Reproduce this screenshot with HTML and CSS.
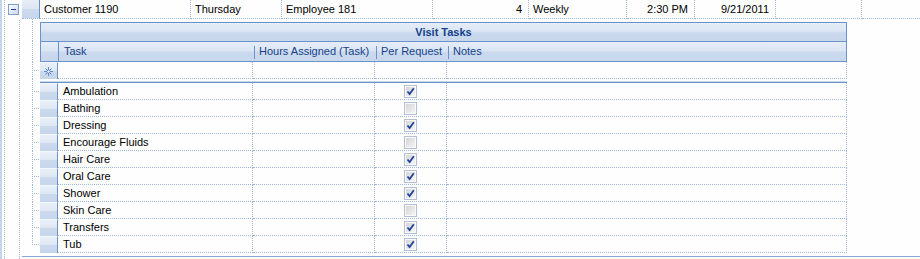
FILE: index.html
```html
<!DOCTYPE html>
<html lang="en">
<head>
    <meta charset="UTF-8">
    <title>Visit Tasks</title>
    <link rel="stylesheet" href="styles.css">
</head>
<body>
<div class="page">
    <div class="master-row">
        <div class="gutter"><span class="expander"><i></i></span></div>
        <div class="row-head"></div>
        <div class="cell">Customer 1190</div>
        <div class="cell">Thursday</div>
        <div class="cell">Employee 181</div>
        <div class="cell num">4</div>
        <div class="cell">Weekly</div>
        <div class="cell num">2:30 PM</div>
        <div class="cell num">9/21/2011</div>
        <div class="cell"></div>
        <div class="cell last"></div>
    </div>

    <div class="detail">
        <div class="d-row gap"><div class="tree"></div></div>
        <div class="d-row">
            <div class="tree"></div>
            <div class="caption">Visit Tasks</div>
        </div>
        <div class="d-row">
            <div class="tree"></div>
            <div class="col-heads">
                <div class="rh"></div>
                <div class="ch">Task</div>
                <div class="ch sep">Hours Assigned (Task)</div>
                <div class="ch sep">Per Request</div>
                <div class="ch sep">Notes</div>
            </div>
        </div>
        <div class="d-row">
            <div class="tree stub"></div>
            <div class="cells">
                <div class="rh">
                    <svg width="9" height="9" viewBox="0 0 9 9"><g stroke="#5f8bcb" stroke-width="1"><line x1="4.5" y1="0" x2="4.5" y2="9"/><line x1="0" y1="4.5" x2="9" y2="4.5"/><line x1="1.5" y1="1.5" x2="7.5" y2="7.5"/><line x1="7.5" y1="1.5" x2="1.5" y2="7.5"/></g><circle cx="4.5" cy="4.5" r="1.6" fill="#fff" stroke="#5f8bcb"/></svg>
                </div>
                <div class="c"></div>
                <div class="c"></div>
                <div class="c"></div>
                <div class="c"></div>
            </div>
        </div>
        <div class="d-row">
            <div class="tree"></div>
            <div class="divider"></div>
        </div>
        <div id="rows"></div>
    </div>

    <div class="next-row"></div>
</div>

<script>
    var tasks = [
        ["Ambulation", true], ["Bathing", false], ["Dressing", true],
        ["Encourage Fluids", false], ["Hair Care", true], ["Oral Care", true],
        ["Shower", true], ["Skin Care", false], ["Transfers", true], ["Tub", true]
    ];
    var tick = '<svg width="11" height="11" viewBox="0 0 11 11"><path d="M2.5 5.5 L4.6 8 L8.8 2.2" fill="none" stroke="#20439b" stroke-width="1.8"/></svg>';
    var html = "";
    tasks.forEach(function (t, i) {
        html += '<div class="d-row">' +
            '<div class="tree stub' + (i == tasks.length - 1 ? ' end' : '') + '"></div>' +
            '<div class="cells">' +
            '<div class="rh"></div>' +
            '<div class="c">' + t[0] + '</div>' +
            '<div class="c"></div>' +
            '<div class="c mid"><span class="chk">' + (t[1] ? tick : '') + '</span></div>' +
            '<div class="c"></div>' +
            '</div></div>';
    });
    document.getElementById("rows").innerHTML = html;
</script>
</body>
</html>
```

FILE: styles.css
```css
body {
    margin: 0;
    font-family: "Liberation Sans", Arial, sans-serif;
    font-size: 11px;
    color: #000;
    background: #fdfefd;
}
.page {
    min-height: 100vh;
    background:
        linear-gradient(#c3d5ef, #c3d5ef) 0 0 / 2px 100% no-repeat,
        repeating-linear-gradient(to bottom, #9fb7dc 0 1px, transparent 1px 2px) 4px 0 / 1px 100% no-repeat,
        repeating-linear-gradient(to bottom, #9fb7dc 0 1px, transparent 1px 2px) 19px 0 / 1px 100% no-repeat;
}

/* master row */
.master-row {
    display: grid;
    grid-template-columns: 22px 18px 151px 91px 151px 96px 98px 68px 81px 86px 1fr;
    height: 19px;
}
.gutter {
    background:
        linear-gradient(#c3d5ef, #c3d5ef) 0 0 / 2px 100% no-repeat,
        repeating-linear-gradient(to bottom, #9fb7dc 0 1px, transparent 1px 2px) 4px 0 / 1px 100% no-repeat,
        #fdfefd;
    padding: 4px 0 0 8px;
}
.expander {
    display: flex;
    align-items: center;
    justify-content: center;
    width: 9px;
    height: 9px;
    border: 1px solid #7e9fd0;
    background: linear-gradient(135deg, #ffffff, #c9d8ef);
}
.expander i {
    width: 5px;
    height: 1px;
    background: #1f3f86;
}
.row-head {
    background: linear-gradient(#e6edf8, #dce6f4 50%, #ccdaee 50%, #c6d6eb);
    border-right: 1px solid #6b93cb;
    border-bottom: 1px dotted #9fb7dc;
}
.cell {
    border-right: 1px dotted #9fb7dc;
    border-bottom: 1px dotted #9fb7dc;
    padding: 0 4px;
    line-height: 18px;
    white-space: nowrap;
}
.cell.num {
    text-align: right;
    padding-right: 6px;
}
.cell.last {
    border-right: none;
}

/* detail grid */
.d-row {
    display: flex;
}
.d-row.gap {
    height: 3px;
}
.tree {
    width: 40px;
    flex: none;
    background: repeating-linear-gradient(to bottom, #9fb7dc 0 1px, transparent 1px 2px) 32px 0 / 1px 100% no-repeat;
}
.tree.stub {
    background:
        repeating-linear-gradient(to right, #9fb7dc 0 1px, transparent 1px 2px) 32px 8px / 8px 1px no-repeat,
        repeating-linear-gradient(to bottom, #9fb7dc 0 1px, transparent 1px 2px) 32px 0 / 1px 100% no-repeat;
}
.tree.stub.end {
    background:
        repeating-linear-gradient(to right, #9fb7dc 0 1px, transparent 1px 2px) 32px 8px / 8px 1px no-repeat,
        repeating-linear-gradient(to bottom, #9fb7dc 0 1px, transparent 1px 2px) 32px 0 / 1px 9px no-repeat;
}
.caption {
    width: 805px;
    height: 18px;
    line-height: 19px;
    border: 1px solid #6b93cb;
    border-bottom: none;
    text-align: center;
    font-weight: bold;
    color: #15428b;
    background: linear-gradient(#e5edf8, #dbe5f4 45%, #cbd9ee 55%, #c8d7ec);
}
.col-heads {
    display: grid;
    grid-template-columns: 18px 195px 122px 72px 1fr;
    width: 805px;
    height: 19px;
    border: 1px solid #6b93cb;
    background: linear-gradient(#e5edf8, #dbe5f4 45%, #cbd9ee 55%, #c8d7ec);
}
.col-heads .rh {
    border-right: 1px solid #6b93cb;
}
.ch {
    color: #15428b;
    padding-left: 5px;
    line-height: 19px;
    white-space: nowrap;
}
.ch.sep {
    background: linear-gradient(#6b93cb, #6b93cb) 0 4px / 1px 13px no-repeat;
}
.cells {
    display: grid;
    grid-template-columns: 18px 195px 122px 72px 400px;
    height: 17px;
}
.cells .rh {
    display: flex;
    align-items: center;
    justify-content: center;
    border-right: 1px solid #6b93cb;
    background: linear-gradient(#eaf0f9, #dde7f4 50%, #cddaee 50%, #c5d5ea);
    border-top: 1px solid #f2f6fb;
}
.c {
    border-right: 1px dotted #9fb7dc;
    border-bottom: 1px dotted #9fb7dc;
    padding-left: 5px;
    line-height: 16px;
    white-space: nowrap;
}
.c.mid {
    display: flex;
    align-items: center;
    justify-content: center;
    padding-left: 0;
}
.chk {
    display: flex;
    align-items: center;
    justify-content: center;
    width: 11px;
    height: 11px;
    border: 1px solid #b2bfd4;
    background: linear-gradient(135deg, #d2d2d2, #f7f7f7);
    box-shadow: inset 0 0 0 1px #fafafa;
}
.divider {
    width: 807px;
    height: 4px;
    background: linear-gradient(#fdfefd 0 2px, #c4d5ee 2px 3px, #6b93cb 3px 4px);
}
.next-row {
    margin: 3px 0 0 22px;
    border-top: 1px solid #86a9dc;
}
```
